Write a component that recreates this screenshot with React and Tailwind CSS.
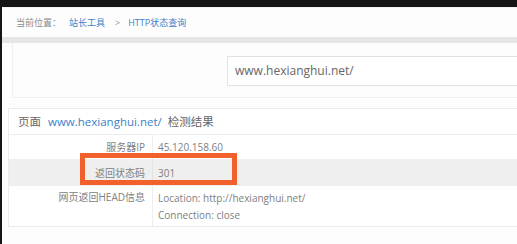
import React from "react";

const font = { fontFamily: '"Open Sans", "Noto Sans CJK SC", sans-serif' };

export default function App() {
  return (
    <div className="w-[517px] h-[244px] bg-[#151515] overflow-hidden pt-[7px] pl-[2px]" style={font}>
      <div className="relative h-[237px] bg-[#fdfdfd]">
        {/* breadcrumb */}
        <div className="h-[30px] flex items-center pl-[14px] text-[9px] text-[#8a8a8a] border-t border-[#f3f3f3]">
          <span>当前位置：</span>
          <span className="ml-[8px] text-[#3d7fc8]">站长工具</span>
          <span className="ml-[10px] mr-[8px] text-[#999]">&gt;</span>
          <span className="text-[#3d7fc8]">HTTP状态查询</span>
        </div>
        <div className="h-[6px] bg-[#e6e6e6]" />
        {/* search panel */}
        <div className="ml-[10px] h-[55px] border-l border-b border-[#f0f0f0] flex items-center pt-[1px]">
          <div className="ml-[214px] flex-1 h-[30px] border border-r-0 border-[#e2e2e2] bg-white flex items-center pl-[7px] text-[12px] text-[#666]">
            www.hexianghui.net/
          </div>
        </div>
        {/* results */}
        <div className="ml-[6px] mt-[10px] border border-r-0 border-[#ececec] bg-white">
          <div className="h-[26px] flex items-center pl-[9px] text-[11.5px] text-[#666] border-b border-[#eeeeee]">
            <span>页面</span>
            <span className="ml-[7px] text-[#3d7fc8]">www.hexianghui.net/</span>
            <span className="ml-[6px]">检测结果</span>
          </div>
          <div className="h-[25px] flex text-[10px] text-[#808080] border-b border-[#f0f0f0]">
            <div className="w-[144px] flex items-center justify-end pr-[7px] border-r border-[#eeeeee]">服务器IP</div>
            <div className="flex items-center pl-[5px]">45.120.158.60</div>
          </div>
          <div className="h-[26px] flex text-[10px] text-[#808080] bg-[#efefef]">
            <div className="w-[144px] flex items-center justify-end pr-[7px] border-r border-[#e4e4e4]">返回状态码</div>
            <div className="flex items-center pl-[5px]">301</div>
          </div>
          <div className="h-[40px] flex text-[10px] text-[#808080]">
            <div className="w-[144px] flex justify-end pt-[4px] pr-[7px] border-r border-[#eeeeee]">网页返回HEAD信息</div>
            <div className="flex flex-col pl-[5px] pt-[4px] leading-[17px]">
              <span>Location: http://hexianghui.net/</span>
              <span>Connection: close</span>
            </div>
          </div>
        </div>
        {/* highlight */}
        <div className="absolute left-[78px] top-[146px] w-[157px] h-[32px] border-[5px] border-[#f2602b]" />
      </div>
    </div>
  );
}
